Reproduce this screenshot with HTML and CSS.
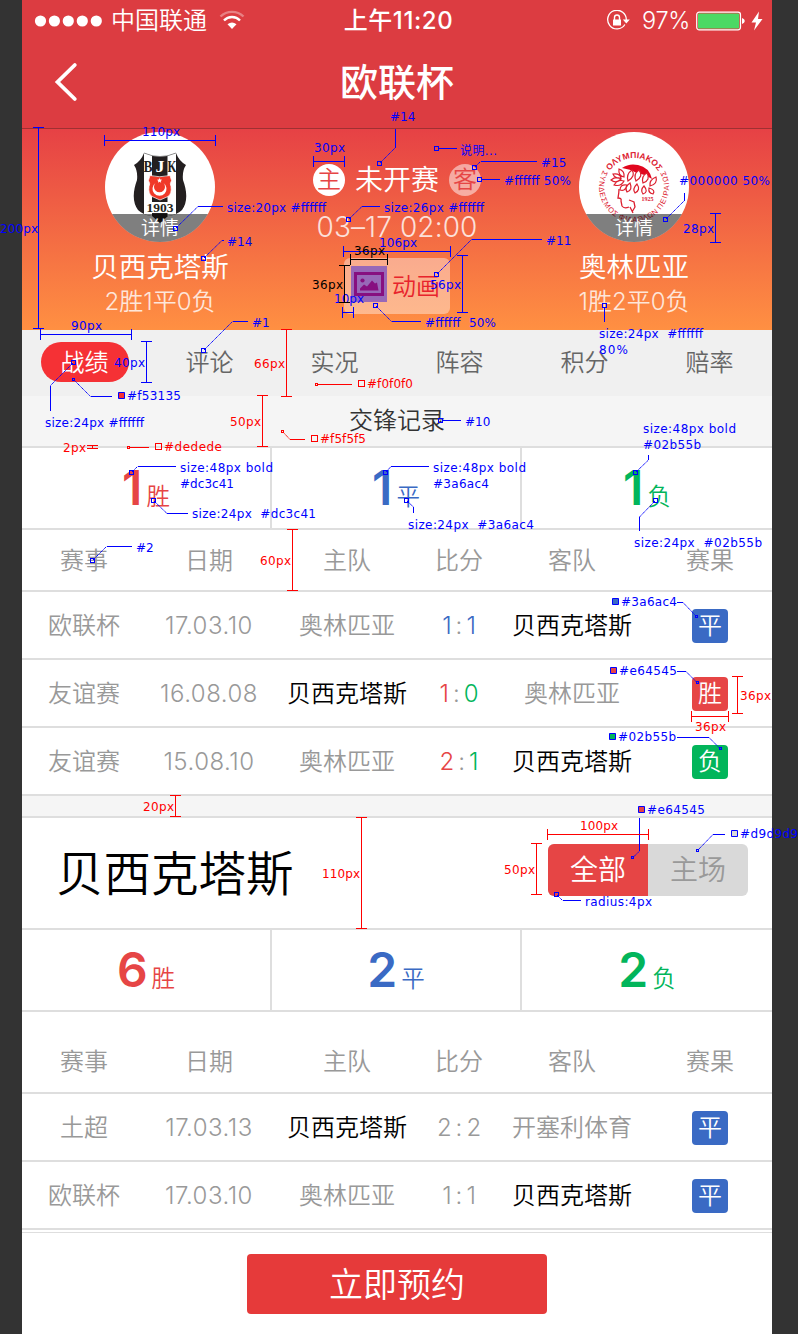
FILE: index.html
```html
<!DOCTYPE html>
<html lang="zh-CN">
<head>
<meta charset="utf-8">
<title>欧联杯</title>
<link rel="stylesheet" href="styles.css">
</head>
<body>
<div class="canvas">
<main class="phone">
  <div class="status">
    <div class="status-left">
      <svg width="68" height="12" viewBox="0 0 68 12" fill="#fff"><circle cx="6.500" cy="6" r="5.600"/><circle cx="20.400" cy="6" r="5.600"/><circle cx="34.300" cy="6" r="5.600"/><circle cx="48.300" cy="6" r="5.600"/><circle cx="62.300" cy="6" r="5.600"/></svg>
      <span class="carrier">中国联通</span>
      <svg class="wifi" width="26" height="20" viewBox="0 0 26 20" fill="none" stroke="#fff" stroke-width="2.400"><path d="M1.500 6.500A16.500 16.500 0 0 1 24.500 6.500" opacity=".35"/><path d="M5 10.500A11 11 0 0 1 21 10.500"/><path d="M8.500 14.300Q13 10.500 17.500 14.300L13 19Z" fill="#fff" stroke="none"/></svg>
    </div>
    <span class="time">上午11:20</span>
    <div class="status-right">
      <svg width="24" height="22" viewBox="0 0 24 22"><path d="M18.900 14.500A9.300 9.300 0 1 1 20.300 10" fill="none" stroke="#fff" stroke-width="1.300"/><path d="M16.800 9.500h7l-3.500 4z" fill="#fff"/><rect x="7" y="9.500" width="8" height="6" fill="#fff"/><path d="M8.500 10V7.500a2.500 2.500 0 0 1 5 0V10" fill="none" stroke="#fff" stroke-width="1.400"/></svg>
      <span class="percent">97%</span>
      <svg width="50" height="20" viewBox="0 0 50 20"><rect x=".7" y="1.200" width="43.800" height="17.600" rx="2.500" fill="none" stroke="#fff" stroke-width="1.200"/><rect x="2" y="2.500" width="41.200" height="15" rx="1" fill="#4cd964"/><path d="M46 7q2.800 1 2.800 3t-2.800 3z" fill="#fff"/></svg>
      <svg class="bolt" width="12" height="20" viewBox="0 0 12 20"><path d="M8 0.500 0.500 11.500h4.500L3 19.500l8.500-11.500H7z" fill="#fff"/></svg>
    </div>
  </div>
  <header class="nav">
    <svg class="back" width="24" height="40" viewBox="0 0 24 40"><path d="M20.800 3 3.500 20 20.800 37" fill="none" stroke="#fff" stroke-width="3.800" stroke-linecap="round" stroke-linejoin="miter"/></svg>
    <h1>欧联杯</h1>
  </header>

  <section class="hero">
    <div class="team">
      <div class="avatar">
        <svg width="110" height="110" viewBox="0 0 110 110">
          <defs><clipPath id="shield"><path d="M39 21Q55 28 71 21Q74 29 81 33Q77 39 78 48Q85 67 77 78Q72 83 63 84L55 91L47 84Q38 83 33 78Q25 67 32 48Q33 39 29 33Q36 29 39 21Z"/></clipPath></defs>
          <g clip-path="url(#shield)"><rect x="25" y="15" width="60" height="80" fill="#231f20"/><path d="M39 20h8v64h-8zM62.500 20H71v64h-8.500zM41 70h28v11H41z" fill="#fff"/></g>
          <path d="M39 21Q55 28 71 21" fill="none" stroke="#777" stroke-width=".7"/>
          <g class="crest" font-size="16.500"><text x="38.500" y="39.500" textLength="9" lengthAdjust="spacingAndGlyphs" fill="#231f20">B</text><text x="50.500" y="39.500" textLength="9" lengthAdjust="spacingAndGlyphs" fill="#fff">J</text><text x="62.500" y="39.500" textLength="9" lengthAdjust="spacingAndGlyphs" fill="#231f20">K</text><text x="41.500" y="79.500" font-size="13" textLength="27" lengthAdjust="spacingAndGlyphs" fill="#231f20">1903</text></g>
          <path d="M45 43.500q9.500 2.500 20 0l1.500 5q-2 3-.5 6q1 7-3 10l-8 3.500-8-3.500q-4-3-3-10q1.500-3-.5-6z" fill="#f03828" stroke="#fff" stroke-width=".7"/>
          <path d="M50.500 51a7 7 0 1 0 8 0a5.500 5.500 0 1 1-8 0z" fill="#fff"/><path d="m54.500 46 .8 1.600 1.800.1-1.400 1.200.5 1.800-1.700-1-1.600 1 .4-1.800-1.300-1.200 1.800-.1z" fill="#fff"/>
        </svg>
        <span class="detail">详情</span>
      </div>
      <div class="team-name">贝西克塔斯</div>
      <div class="team-record">2胜1平0负</div>
    </div>
    <div class="match">
      <div class="match-state"><span class="side">主</span><span class="state">未开赛</span><span class="side side-away">客</span></div>
      <div class="kickoff">03–17 02:00</div>
      <div class="animation">
        <svg width="36" height="36" viewBox="0 0 36 36"><rect width="36" height="36" fill="#9868b8"/><rect x="4.500" y="7.500" width="27" height="21" fill="none" stroke="#870f80" stroke-width="3"/><circle cx="11.500" cy="14.500" r="2.100" fill="#870f80"/><path d="M9 24.500v-2l4-4 3 2 5-6 3 3 2-1L27.500 24.500z" fill="#870f80"/></svg>
        <span>动画</span>
      </div>
    </div>
    <div class="team">
      <div class="avatar">
        <svg width="110" height="110" viewBox="0 0 110 110">
          <defs><path id="ring-top" d="M29.900 40.500A29 29 0 0 1 80.100 40.500"/><path id="ring-bottom" d="M24.700 37.500A35 35 0 1 0 85.300 37.500"/></defs>
          <g class="crest-ring" font-size="7.500" fill="#dc2030"><text font-size="8.500" font-weight="bold"><textPath href="#ring-top" startOffset="2" textLength="57">ΟΛΥΜΠΙΑΚΟΣ</textPath></text><text><textPath href="#ring-bottom" startOffset="1" textLength="53">ΣΥΝΔΕΣΜΟΣ</textPath></text><text><textPath href="#ring-bottom" startOffset="57" textLength="43">ΦΙΛΑΘΛΩΝ</textPath></text><text><textPath href="#ring-bottom" startOffset="103" textLength="42">ΠΕΙΡΑΙΩΣ</textPath></text></g>
          <path d="M43 36q7-5 16-3q11 2 14 14q-8-5-15-6q-7-4-15-5z" fill="#e1061e"/>
          <g fill="#fff" stroke="#dc2030" stroke-width="1.200"><path d="M35 53q4-6 10-4q-3 6-10 4zM32 48q5-4 10-1q-5 5-10 1zM34 42q7-1 8 4q-6 1-8-4zM40 37q6 2 5 8q-6-1-5-8zM48 53q-7-1-7 5q5 2 7-5zM49 49q-2-7 4-11q4 6-4 11zM51 51q-6 4-3 9q6-2 3-9zM57 49q-3-7 3-11q5 6-3 11zM58 52q-5 5-2 9q6-3 2-9zM64 51q-2-7 4-10q4 7-4 10zM65 54q-4 4-1 8q6-2 1-8zM71 54q-1-6 6-9q2 7-6 9zM70 56q-1 5 4 6q3-4-4-6z"/></g>
          <path d="M40 57q0 4-1 9q4 0 3 3l1 5q2 3 7 1M51 75q2 4 3 6M50 68l5 2 1 5-3 5" fill="none" stroke="#dc2030" stroke-width="1.300"/>
          <text class="crest" x="68.500" y="69" font-size="6" text-anchor="middle" fill="#dc2030">1925</text>
        </svg>
        <span class="detail">详情</span>
      </div>
      <div class="team-name">奥林匹亚</div>
      <div class="team-record">1胜2平0负</div>
    </div>
  </section>

  <nav class="tabs"><a class="active"><span>战绩</span></a><a>评论</a><a>实况</a><a>阵容</a><a>积分</a><a>赔率</a></nav>
  <h2 class="section-title">交锋记录</h2>
  <section class="stats">
    <div class="win"><b>1</b><span>胜</span></div><div class="draw"><b>1</b><span>平</span></div><div class="loss"><b>1</b><span>负</span></div>
  </section>
  <section class="table">
    <div class="row head"><span>赛事</span><span>日期</span><span>主队</span><span>比分</span><span>客队</span><span>赛果</span></div>
    <div class="row"><span>欧联杯</span><span class="num">17.03.10</span><span>奥林匹亚</span><span class="score"><i class="draw">1</i>:<i class="draw">1</i></span><span class="own">贝西克塔斯</span><em class="bg-draw">平</em></div>
    <div class="row"><span>友谊赛</span><span class="num">16.08.08</span><span class="own">贝西克塔斯</span><span class="score"><i class="win">1</i>:<i class="loss">0</i></span><span>奥林匹亚</span><em class="bg-win">胜</em></div>
    <div class="row"><span>友谊赛</span><span class="num">15.08.10</span><span>奥林匹亚</span><span class="score"><i class="win">2</i>:<i class="loss">1</i></span><span class="own">贝西克塔斯</span><em class="bg-loss">负</em></div>
  </section>
  <div class="gap"></div>
  <section class="team-head"><h3>贝西克塔斯</h3><div class="toggle"><span class="on">全部</span><span>主场</span></div></section>
  <section class="stats">
    <div class="win"><b>6</b><span>胜</span></div><div class="draw"><b>2</b><span>平</span></div><div class="loss"><b>2</b><span>负</span></div>
  </section>
  <section class="table">
    <div class="row head head-tall"><span>赛事</span><span>日期</span><span>主队</span><span>比分</span><span>客队</span><span>赛果</span></div>
    <div class="row"><span>土超</span><span class="num">17.03.13</span><span class="own">贝西克塔斯</span><span class="score"><i>2</i>:<i>2</i></span><span>开塞利体育</span><em class="bg-draw">平</em></div>
    <div class="row"><span>欧联杯</span><span class="num">17.03.10</span><span>奥林匹亚</span><span class="score"><i>1</i>:<i>1</i></span><span class="own">贝西克塔斯</span><em class="bg-draw">平</em></div>
  </section>
  <footer class="footer"><button>立即预约</button></footer>
</main>

<!-- Design notes: dimensions, colours and type sizes -->
<svg class="notes" width="798" height="1334" viewBox="0 0 798 1334">
  <g class="blue">
    <path class="line" d="M104.500 140.500H215.500M104.500 135v11M215.500 135v11M38.500 127.500V328.500M33 127.500h11M33 328.500h11M40.500 334.500H131.500M40.500 329v11M131.500 329v11M313.500 161.500H344.500M313.500 156v11M344.500 156v11M343.500 251.500H450.500M343.500 246v11M450.500 246v11M342.500 312.500h11M342.500 307v11M353.500 307v11M462.500 255.500V312.500M457 255.500h11M457 312.500h11M715.500 213.500V242.500M710 213.500h11M710 242.500h11M146.500 341.500V382.500M141 341.500h11M141 382.500h11"/>
    <path class="line" d="M198 206.500h25M222 240.500h2M232.500 321.500H248M395.500 129v18.500M438 148.500h19M480.500 161.500H537M481 179.500h19M362 206.500h18M471.500 239.500H542M391.500 321.500H421M684.500 200.500V193M604.500 307v15M90.500 396.500H112M50.500 385.500V411M442 420.500h19M137.500 466.500H176M167 513.500h21M391 466.500h38M413.500 507v6M648.500 460v-5M639.500 517v14M106.500 546.500H132M677 602.500h6M677 671.500h9M677 737.500h32M639.500 818v33M725 834.500h-12M562.500 900.500H581"/>
    <path class="diagonal" d="M176 228 198 206.500M204 258 222 240.500M204 350 232.500 321.500M395.500 147.500 380 163M475 167l5.500-5.500M349 219l13-12.500M437 274l34.500-34.500M376 306l15.500 15.500M666 219l18.500-18.500M74 380l16.500 16.500M73 363 50.500 385.500M132 472l5.500-5.500M154 501l13 12.500M386 472l5-5.500M407 501l6.500 6M636 472l12.500-12M655 501l-15.500 16M93 560l13.500-13.500M683 602.500l13 13.500M686 671.500l11 11M709 737.500l11 11M639.500 851l-6.500 6.500M713 834.500l-15 15.500M557 895l5.500 5.500"/>
    <path class="mark" d="M173.500 226.500h4v4h-4zM201.500 256.500h4v4h-4zM201.500 348.500h4v4h-4zM377.500 161.500h4v4h-4zM434.500 146.500h4v4h-4zM472.500 165.500h4v4h-4zM477.500 177.500h4v4h-4zM346.500 217.500h4v4h-4zM434.500 272.500h4v4h-4zM373.500 303.500h4v4h-4zM663.500 217.500h4v4h-4zM602.500 303.500h4v4h-4zM71.500 360.500h4v4h-4zM438.500 418.500h4v4h-4zM129.500 470.500h4v4h-4zM151.500 498.500h4v4h-4zM383.500 470.500h4v4h-4zM404.500 498.500h4v4h-4zM633.500 470.500h4v4h-4zM653.500 498.500h4v4h-4zM90.500 558.500h4v4h-4zM554.500 892.500h4v4h-4zM72.500 378.500h2v2h-2zM695.500 615.500h2v2h-2zM696.500 681.500h2v2h-2zM719.500 747.500h2v2h-2zM631.500 856.500h2v2h-2zM696.500 849.500h2v2h-2z"/>
    <g class="swatch"><path d="M118.500 392.500h6v6h-6z" fill="#f53135"/><path d="M612.500 598.500h6v6h-6z" fill="#3a6ac4"/><path d="M610.500 667.500h6v6h-6zM638.500 806.500h6v6h-6z" fill="#e64545"/><path d="M609.500 733.500h6v6h-6z" fill="#02b55b"/><path d="M731.500 830.500h6v6h-6z" fill="#d9d9d9"/></g>
    <text x="142" y="136" textLength="38">110px</text><text x="0" y="233" textLength="38">200px</text><text x="227" y="212" textLength="99">size:20px #ffffff</text><text x="227" y="246">#14</text><text x="71" y="330" textLength="31">90px</text><text x="252" y="327">#1</text><text x="390" y="121">#14</text><text x="314" y="152" textLength="31">30px</text><text x="460" y="155" textLength="37">说明...</text><text x="541" y="167">#15</text><text x="504" y="185" textLength="67">#ffffff 50%</text><text x="384" y="212" textLength="100">size:26px #ffffff</text><text x="379" y="247" textLength="38">106px</text><text x="334" y="303" textLength="30">10px</text><text x="430" y="289" textLength="31">56px</text><text x="546" y="245">#11</text><text x="425" y="327" textLength="71">#ffffff&#160; 50%</text><text x="679" y="185" textLength="91">#000000 50%</text><text x="683" y="233" textLength="31">28px</text><text x="599" y="338" textLength="104">size:24px&#160; #ffffff</text><text x="599" y="354" textLength="29">80%</text><text x="114" y="367" textLength="31">40px</text><text x="127" y="400" textLength="54">#f53135</text><text x="45" y="427" textLength="99">size:24px #ffffff</text><text x="465" y="426">#10</text>
    <text x="180" y="472" textLength="93">size:48px bold</text><text x="180" y="488" textLength="54">#dc3c41</text><text x="192" y="518" textLength="124">size:24px&#160; #dc3c41</text><text x="433" y="472" textLength="93">size:48px bold</text><text x="433" y="488" textLength="56">#3a6ac4</text><text x="408" y="529" textLength="126">size:24px&#160; #3a6ac4</text><text x="643" y="433" textLength="93">size:48px bold</text><text x="643" y="449" textLength="58">#02b55b</text><text x="634" y="547" textLength="128">size:24px&#160; #02b55b</text><text x="136" y="552">#2</text><text x="621" y="606" textLength="56">#3a6ac4</text><text x="619" y="675" textLength="58">#e64545</text><text x="618" y="741" textLength="58">#02b55b</text><text x="647" y="814" textLength="58">#e64545</text><text x="740" y="838" textLength="58">#d9d9d9</text><text x="585" y="906" textLength="67">radius:4px</text>
  </g>
  <g class="black">
    <path class="line" d="M350.500 259.500H387.500M350.500 254v11M387.500 254v11M344.500 265.500V302.500M339 265.500h11M339 302.500h11"/>
    <text x="354" y="255" textLength="31">36px</text><text x="312" y="289" textLength="31">36px</text>
  </g>
  <g class="red">
    <path class="line" d="M286.500 329.500V396.500M281 329.500h11M281 396.500h11M262.500 395.500V446.500M257 395.500h11M257 446.500h11M87 445.500h11M87 448.500h11M92.500 445v3M292.500 529.500V590.500M287 529.500h11M287 590.500h11M737.500 676.500V713.500M732 676.500h11M732 713.500h11M691.500 716.500H728.500M691.500 711v11M728.500 711v11M175.500 795.500V816.500M170 795.500h11M170 816.500h11M361.500 817.500V928.500M356 817.500h11M356 928.500h11M547.500 834.500H648.500M547.500 829v11M648.500 829v11M536.500 843.500V894.500M531 843.500h11M531 894.500h11M318 384.500h34M290 439.500h15M130 447.500h19"/>
    <path class="diagonal" d="m283 432 7 7.500"/>
    <path class="mark" d="M315.500 383.500h2v2h-2zM281.500 430.500h2v2h-2zM127.500 446.500h2v2h-2zM358.500 380.500h6v6h-6zM311.500 435.500h6v6h-6zM155.500 443.500h6v6h-6z"/>
    <text x="254" y="368" textLength="31">66px</text><text x="367" y="388" textLength="46">#f0f0f0</text><text x="230" y="426" textLength="31">50px</text><text x="320" y="443" textLength="46">#f5f5f5</text><text x="63" y="452" textLength="23">2px</text><text x="164" y="451" textLength="58">#dedede</text><text x="260" y="565" textLength="31">60px</text><text x="740" y="700" textLength="31">36px</text><text x="695" y="731" textLength="31">36px</text><text x="143" y="811" textLength="31">20px</text><text x="322" y="878" textLength="38">110px</text><text x="580" y="830" textLength="38">100px</text><text x="504" y="874" textLength="31">50px</text>
  </g>
</svg>
</div>
</body>
</html>
```

FILE: styles.css
```css
* { box-sizing: border-box; }
body { margin: 0; background: #333; font-family: Inter, "Noto Sans CJK SC", sans-serif; font-weight: 350; }
h1, h2, h3, i, em, button { margin: 0; font: inherit; font-style: normal; }
svg { display: block; flex: none; }
.canvas { position: relative; width: 798px; height: 1334px; overflow: hidden; }
.phone { width: 750px; height: 1334px; margin-left: 22px; background: #fff; display: flex; flex-direction: column; font-size: 24px; color: #999; }
.phone > * { flex: none; }

.status { height: 40px; background: #dc3c41; color: #fff; display: grid; grid-template-columns: 1fr auto 1fr; align-items: center; padding: 1px 9px 0 12px; line-height: 40px; }
.status-left, .status-right { display: flex; align-items: center; }
.status-right { justify-content: flex-end; }
.carrier { margin: 0 12px 0 9px; }
.wifi { margin-top: -2px; }
.time { font-weight: 500; letter-spacing: .6px; }
.percent { margin: 0 6px 0 12px; font-size: 23.500px; letter-spacing: -.3px; }
.bolt { margin-left: 5px; }
.nav { height: 88px; background: #dc3c41; color: #fff; display: grid; grid-template-columns: 54px 1fr 54px; align-items: center; padding-bottom: 4px; }
.nav h1 { text-align: center; font-size: 38px; font-weight: 500; line-height: 84px; }
.back { margin-left: 32px; }

.hero { height: 202px; border-top: 1px solid #9f3032; background: linear-gradient(#e64145, #ff9042); color: #fff; display: grid; grid-template-columns: 276px 198px 276px; padding-top: 3px; }
.team { display: flex; flex-direction: column; align-items: center; }
.avatar { position: relative; width: 110px; height: 110px; border-radius: 50%; overflow: hidden; background: #fff; }
.detail { position: absolute; inset: auto 0 0; height: 28px; background: rgba(0,0,0,.5); text-align: center; font-size: 19px; line-height: 29px; }
.crest { font-family: "Liberation Serif", serif; font-weight: bold; }
.crest-ring { font-family: "Liberation Sans", sans-serif; }
.team-name { font-size: 27.500px; line-height: 40px; margin-top: 5px; }
.team-record { line-height: 30px; opacity: .8; }
.match { display: flex; flex-direction: column; align-items: center; }
.match-state { display: flex; align-items: center; gap: 10px; height: 32px; margin-top: 32px; }
.side { width: 32px; height: 32px; border-radius: 50%; background: #fff; color: #e64545; text-align: center; line-height: 31px; }
.side-away { background: rgba(255,255,255,.5); }
.state { font-size: 28px; line-height: 30px; }
.kickoff { font-size: 28px; line-height: 32px; margin-top: 15px; opacity: .8; white-space: nowrap; letter-spacing: .1px; }
.animation { width: 106px; height: 56px; border-radius: 6px; background: rgba(255,255,255,.4); margin-top: 15px; padding: 0 0 4px 7px; display: flex; align-items: center; gap: 5px; color: #e8242c; }

.tabs { height: 66px; background: #f0f0f0; color: #666; display: grid; grid-template-columns: repeat(6, 1fr); text-align: center; line-height: 65px; }
.active { display: flex; justify-content: center; padding-top: 12px; color: #fff; }
.active span { width: 88px; height: 40px; border-radius: 20px; background: #f53135; line-height: 41px; }
.section-title { height: 52px; background: #f5f5f5; border-bottom: 2px solid #dedede; color: #333; text-align: center; line-height: 49px; }

.stats { height: 82px; border-bottom: 2px solid #dedede; display: grid; grid-template: 80px / 250px 250px 250px; }
.stats div { display: flex; justify-content: center; align-items: baseline; gap: 4px; line-height: 80px; border-right: 2px solid #dedede; }
.stats div:last-child { border-right: 0; }
.stats b { font-size: 48px; font-weight: 600; }
.stats span { font-size: 23.500px; line-height: 30px; }
.win { color: #e64545; }
.draw { color: #3a6ac4; }
.loss { color: #02b55b; }

.row { height: 68px; border-bottom: 2px solid #dedede; display: grid; grid-template-columns: 124px 126px 150px 74px 152px 124px; align-items: center; justify-items: center; padding-top: 2px; line-height: 64px; white-space: nowrap; }
.num { letter-spacing: .5px; }
.head { height: 62px; line-height: 58px; }
.head-tall { height: 82px; padding-top: 20px; }
.own { color: #000; }
.score { display: flex; gap: 4px; }
.row em { width: 36px; height: 34px; border-radius: 4px; color: #fff; text-align: center; line-height: 33px; }
.bg-win { background: #e64545; }
.bg-draw { background: #3a6ac4; }
.bg-loss { background: #02b55b; }
.gap { height: 22px; background: #f5f5f5; border-bottom: 2px solid #dedede; }
.team-head { height: 112px; border-bottom: 2px solid #dedede; padding: 2px 24px 0 34px; display: flex; justify-content: space-between; align-items: center; }
.team-head h3 { color: #000; font-size: 47.500px; line-height: 108px; }
.toggle { display: flex; width: 200px; height: 52px; margin-bottom: 8px; border-radius: 6px; overflow: hidden; background: #d9d9d9; font-size: 28px; line-height: 53px; text-align: center; }
.toggle span { width: 100px; }
.toggle .on { background: #e64545; color: #fff; }
.footer { margin-top: 2px; border-top: 1px solid #dedede; padding-top: 21px; display: flex; justify-content: center; }
.footer button { width: 300px; height: 60px; border: 0; border-radius: 4px; background: #e63a3a; color: #fff; font-size: 34px; line-height: 60px; padding: 1px 0 0; }

.notes { position: absolute; left: 0; top: 0; font: 400 12px "DejaVu Sans", "Noto Sans CJK SC", sans-serif; }
.notes text { stroke: none; }
.line, .mark { fill: none; stroke-width: 1; shape-rendering: crispEdges; }
.diagonal { fill: none; stroke-width: 1; stroke-dasharray: 1.400 .5; }
.blue { fill: #00f; stroke: #00f; }
.black { fill: #000; stroke: #000; }
.red { fill: #f00; stroke: #f00; }
```
